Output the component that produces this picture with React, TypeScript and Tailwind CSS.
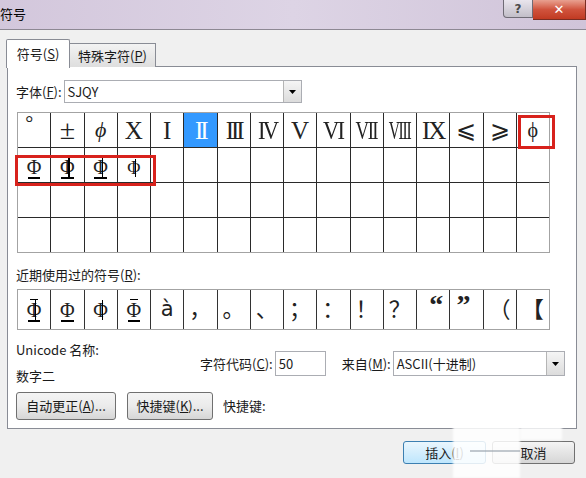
import React from 'react';

const cjk = "font-['Microsoft_YaHei','Noto_Sans_CJK_SC',sans-serif]";
const serif = "font-['Liberation_Serif','DejaVu_Serif','Noto_Sans_CJK_SC',serif]";

// steel-bar style phi glyph: Φ with extra strokes
const Steel = ({ bar = false, dbl = false, top = false, size = 'text-[20px]' }: { bar?: boolean; dbl?: boolean; top?: boolean; size?: string }) => (
  <span className={`relative inline-block leading-none ${size} ${serif}`}>
    Φ
    {bar && <span className="absolute left-[1px] right-[1px] -bottom-[2px] h-[1.5px] bg-black" />}
    {top && <span className="absolute left-[3px] right-[3px] -top-[1px] h-[1.5px] bg-black" />}
    {dbl && <span className="absolute left-1/2 top-0 bottom-0 w-[1.2px] ml-[1px] bg-black" />}
  </span>
);

type Cell = { c: React.ReactNode; cls?: string; sel?: boolean };

const row1: Cell[] = [
  { c: '°', cls: 'text-[20px] -translate-y-[7px] -translate-x-[5px]' },
  { c: '±', cls: 'text-[28px]' },
  { c: 'ϕ', cls: 'text-[22px] italic' },
  { c: 'X' },
  { c: 'I' },
  { c: 'II', sel: true, cls: 'tracking-[-3px]' },
  { c: 'III', cls: 'tracking-[-3px]' },
  { c: 'IV', cls: 'tracking-[-3px] scale-x-90' },
  { c: 'V' },
  { c: 'VI', cls: 'tracking-[-2px] scale-x-90' },
  { c: 'VII', cls: 'tracking-[-2px] scale-x-75' },
  { c: 'VIII', cls: 'tracking-[-2px] scale-x-[0.62]' },
  { c: 'IX', cls: 'tracking-[-2px]' },
  { c: '⩽', cls: 'text-[24px] font-light' },
  { c: '⩾', cls: 'text-[24px] font-light' },
  { c: 'ϕ', cls: 'text-[20px]' },
];

const row2: Cell[] = [
  { c: <Steel bar /> },
  { c: <Steel bar dbl /> },
  { c: <Steel bar dbl top /> },
  { c: <Steel dbl size="text-[18px]" /> },
];

const recent: Cell[] = [
  { c: <Steel bar dbl top /> },
  { c: <Steel bar /> },
  { c: <Steel dbl /> },
  { c: <Steel bar top /> },
  { c: 'à', cls: "text-[21px] font-['DejaVu_Sans',sans-serif]" },
  { c: '，' },
  { c: '。' },
  { c: '、' },
  { c: '；' },
  { c: '：' },
  { c: '！' },
  { c: '？' },
  { c: '“', cls: 'text-[28px] font-bold -translate-y-[5px] translate-x-[3px]' },
  { c: '”', cls: 'text-[28px] font-bold -translate-y-[5px] -translate-x-[3px]' },
  { c: '（' },
  { c: '【', cls: 'font-bold' },
];

const DropArrow = () => (
  <div className="w-[18px] h-full border-l border-[#b5b5b5] bg-linear-to-b from-[#f5f5f5] to-[#dcdcdc] flex items-center justify-center">
    <svg width="7" height="4" viewBox="0 0 7 4">
      <path d="M0 0h7L3.5 4z" fill="#000" />
    </svg>
  </div>
);

const Btn = ({ children, className = '' }: { children: React.ReactNode; className?: string }) => (
  <button
    className={`h-[28px] rounded-[3px] border border-[#707070] bg-linear-to-b from-[#f4f4f4] via-[#ebebeb] to-[#d6d6d6] text-[13px] text-[#1a1a1a] flex items-center justify-center ${className}`}
  >
    {children}
  </button>
);

export default function App() {
  const grid: Cell[] = [...row1, ...row2];
  while (grid.length < 64) grid.push({ c: '' });

  return (
    <div className={`relative w-[586px] h-[478px] overflow-hidden bg-[#f0f0f0] text-[13px] text-[#1a1a1a] ${cjk}`}>
      {/* title bar */}
      <div className="h-[30px] flex justify-between border-b border-[#8d8893] bg-linear-to-r from-[#d3c7dc] via-[#ddd4e5] to-[#d0c4d9]">
        <div className="pt-[5px] text-[13px] text-black leading-[18px]">符号</div>
        <div className="flex items-start">
          <div className="w-[30px] h-[18px] rounded-bl-[4px] border border-t-0 border-[#6f6b75] bg-linear-to-b from-[#e9e5ed] to-[#c2bec8] flex items-center justify-center text-[12px] text-[#4a4a4a] font-bold font-['DejaVu_Sans',sans-serif]">
            ?
          </div>
          <div className="w-[53px] h-[20px] border border-t-0 border-l-0 border-[#7a2d22] bg-linear-to-b from-[#e8a090] via-[#d0533d] to-[#c13a22] flex items-center justify-center text-white text-[13px] font-bold font-['DejaVu_Sans',sans-serif]">
            ✕
          </div>
        </div>
      </div>

      {/* tabs */}
      <div className="flex items-end pl-[6px] pt-[8px] h-[37px]">
        <div className="relative z-10 w-[64px] h-[29px] -mb-px border border-b-0 border-[#898c95] bg-white flex items-center justify-center rounded-t-[2px]">
          符号(<u>S</u>)
        </div>
        <div className="w-[86px] h-[24px] border border-l-0 border-b-0 border-[#898c95] bg-linear-to-b from-[#f3f3f3] to-[#dedede] flex items-center justify-center">
          特殊字符(<u>P</u>)
        </div>
      </div>

      {/* panel */}
      <div className="ml-[7px] w-[570px] h-[363px] -mt-px border border-[#898c95] bg-white pl-[8px] pt-[13px] flex flex-col">
        <div className="flex items-center h-[23px]">
          <span>字体(<u>F</u>):</span>
          <div className="ml-[2px] w-[238px] h-[23px] border border-[#abadb3] bg-white flex items-stretch">
            <span className="flex-1 pl-[3px] leading-[21px]">SJQY</span>
            <DropArrow />
          </div>
        </div>

        <div className="ml-px mt-[9px] w-[533px] h-[141px] border border-[#a3a3a3]">
          <div className={`w-full h-full grid grid-cols-[repeat(16,minmax(0,1fr))] grid-rows-[repeat(4,minmax(0,1fr))] gap-px bg-[#2a2a2a] ${serif}`}>
            {grid.map((cell, i) => (
              <div
                key={i}
                className={`flex items-center justify-center text-[25px] leading-none ${cell.sel ? 'bg-[#3399ff] text-white' : 'bg-white text-[#222]'}`}
              >
                <span className={`inline-block ${cell.cls ?? ''}`}>{cell.c}</span>
              </div>
            ))}
          </div>
        </div>

        <div className="mt-[14px] leading-[16px]">近期使用过的符号(<u>R</u>):</div>

        <div className="ml-px mt-[6px] w-[533px] h-[41px] border border-[#a3a3a3]">
          <div className={`w-full h-full grid grid-cols-[repeat(16,minmax(0,1fr))] gap-px bg-[#333] ${serif}`}>
            {recent.map((cell, i) => (
              <div key={i} className="flex items-center justify-center bg-white text-[22px] leading-none text-[#222]">
                <span className={`inline-block ${cell.cls ?? ''}`}>{cell.c}</span>
              </div>
            ))}
          </div>
        </div>

        <div className="mt-[12px] flex">
          <div className="w-[184px] leading-[16px]">
            <div>Unicode 名称:</div>
            <div className="mt-[10px]">数字二</div>
          </div>
          <div className="mt-[9px] flex items-center h-[25px]">
            <span>字符代码(<u>C</u>):</span>
            <div className="ml-[2px] w-[51px] h-[25px] border border-[#abadb3] pl-[3px] leading-[23px]">50</div>
            <span className="ml-[16px]">来自(<u>M</u>):</span>
            <div className="ml-[2px] w-[172px] h-[25px] border border-[#abadb3] flex items-stretch">
              <span className="flex-1 pl-[3px] leading-[23px]">ASCII(十进制)</span>
              <DropArrow />
            </div>
          </div>
        </div>

        <div className="mt-[8px] flex items-center">
          <Btn className="w-[100px]">自动更正(<u>A</u>)...</Btn>
          <Btn className="ml-[11px] w-[86px]">快捷键(<u>K</u>)...</Btn>
          <span className="ml-[10px]">快捷键:</span>
        </div>
      </div>

      {/* bottom buttons */}
      <div className="mt-[12px] flex justify-end gap-[6px] pr-[11px]">
        <button className="w-[83px] h-[23px] rounded-[3px] border border-[#3c7fb1] bg-linear-to-b from-[#eaf6fd] to-[#bee6fd] text-[13px] flex items-center justify-center">
          插入(<u>I</u>)
        </button>
        <button className="w-[83px] h-[23px] rounded-[3px] border border-[#707070] bg-linear-to-b from-[#f4f4f4] to-[#d6d6d6] text-[13px] flex items-center justify-center">
          取消
        </button>
      </div>

      {/* red annotation boxes */}
      <div className="absolute left-[518px] top-[115px] w-[37px] h-[34px] border-[3px] border-[#d8221c]" />
      <div className="absolute left-[15px] top-[155px] w-[141px] h-[31px] border-[3px] border-[#d8221c]" />

      {/* watermark smear */}
      <div className="absolute left-[453px] top-[421px] w-[67px] h-[57px] bg-white/85 blur-[1px]" />
      <div className="absolute left-[520px] top-[421px] w-[42px] h-[19px] bg-white/80 blur-[1px]" />
      <div className="absolute left-[470px] top-[450px] w-[50px] h-[2px] bg-[#9aa3ad]/60" />
    </div>
  );
}
